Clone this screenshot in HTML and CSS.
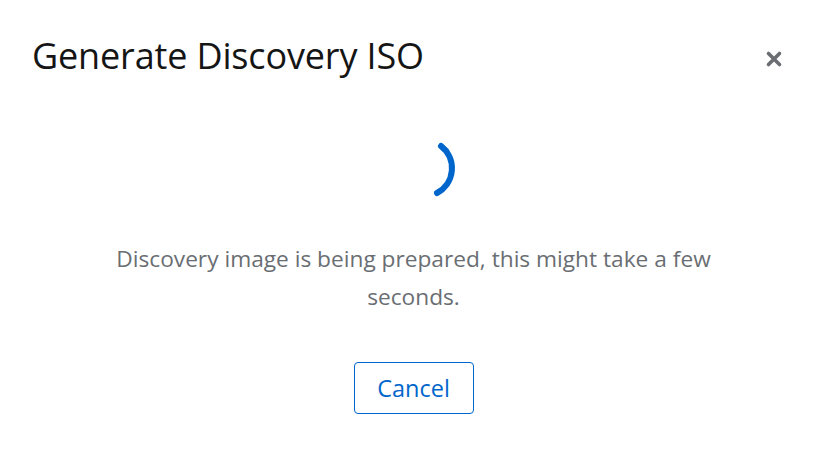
FILE: index.html
```html
<!DOCTYPE html>
<html lang="en">
<head>
<meta charset="utf-8">
<title>Generate Discovery ISO</title>
<link rel="stylesheet" href="styles.css">
</head>
<body>
<div class="modal">
  <header class="modal-header">
    <h1 class="modal-title">Generate Discovery ISO</h1>
    <button class="modal-close" aria-label="Close">
      <svg width="18" height="18" viewBox="0 0 18 18" aria-hidden="true">
        <path d="M3.5 3.5 L14.5 14.5 M14.5 3.5 L3.5 14.5" stroke="#6a6e73" stroke-width="3.6" stroke-linecap="round" fill="none"/>
      </svg>
    </button>
  </header>
  <div class="modal-body">
    <svg class="spinner" width="90" height="80" viewBox="0 0 90 80" aria-label="Loading">
      <path d="M72 16 A28 28 0 0 1 68 63" stroke="#06c" stroke-width="6" stroke-linecap="round" fill="none"/>
    </svg>
    <p class="message">Discovery image is being prepared, this might take a few seconds.</p>
    <button class="btn-cancel">Cancel</button>
  </div>
</div>
</body>
</html>
```
FILE: styles.css
```css
html, body {
  margin: 0;
  padding: 0;
  background: #fff;
}
body {
  font-family: "Open Sans", "Liberation Sans", sans-serif;
  color: #151515;
}
.modal {
  width: 827px;
  height: 456px;
  box-sizing: border-box;
  padding: 0 32px;
}
.modal-header {
  display: flex;
  align-items: center;
  justify-content: space-between;
  padding-top: 34px;
}
.modal-title {
  margin: 0;
  font-family: "Open Sans", sans-serif;
  font-weight: 400;
  font-size: 36px;
  line-height: 44px;
  color: #151515;
  letter-spacing: -0.15px;
}
.modal-close {
  border: none;
  background: transparent;
  padding: 0;
  width: 24px;
  height: 24px;
  display: flex;
  align-items: center;
  justify-content: center;
  margin-right: 9px;
  margin-top: 6px;
  cursor: pointer;
}
.modal-body {
  display: flex;
  flex-direction: column;
  align-items: center;
  padding-top: 52px;
}
.spinner {
  display: block;
}
.message {
  margin: 30px 0 0;
  max-width: 640px;
  text-align: center;
  font-family: "Open Sans", sans-serif;
  font-size: 22.7px;
  line-height: 38px;
  color: #6a6e73;
}
.btn-cancel {
  margin-top: 46px;
  width: 120px;
  height: 52px;
  box-sizing: border-box;
  border: 1px solid #06c;
  border-radius: 4px;
  background: #fff;
  color: #06c;
  font-family: "Open Sans", sans-serif;
  font-size: 23.5px;
  cursor: pointer;
}
```
